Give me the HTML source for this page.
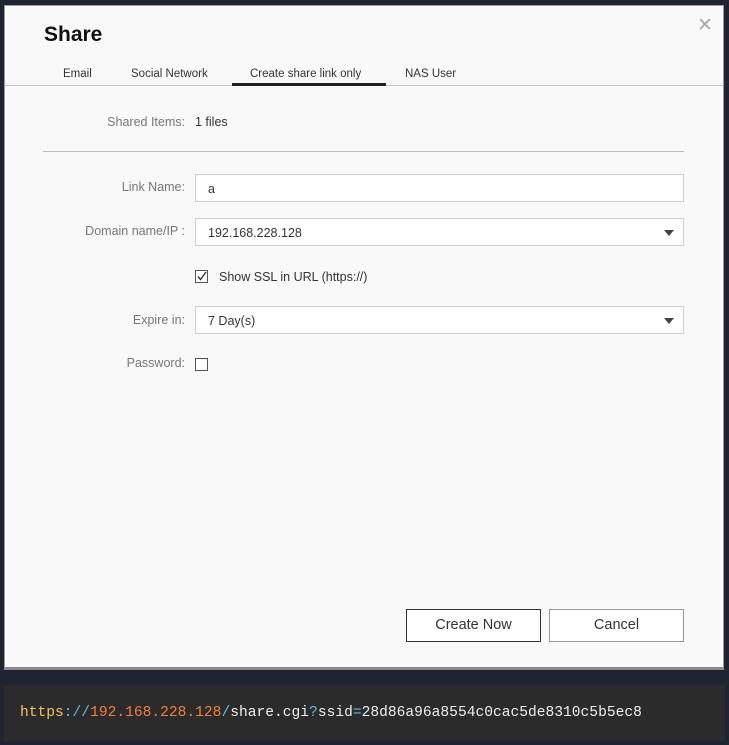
<!DOCTYPE html>
<html><head><meta charset="utf-8"><style>
*{margin:0;padding:0;box-sizing:border-box}
body{width:729px;height:745px;background:#1f2530;position:relative;overflow:hidden;font-family:"Liberation Sans",Arial,sans-serif;}
.dlg{position:absolute;left:4px;top:5px;width:720px;height:665px;background:#f9f9f9;border:1px solid #9a9a9a;border-bottom:3px solid #8a8a8a;}
.a{position:absolute}
.title{left:39px;top:17px;font-size:21px;font-weight:bold;color:#111}
.x{left:692px;top:8px;font-size:19px;color:#aaa}
.tab{top:62px;font-size:11.5px;color:#333}
.tabline{left:0;top:79px;width:718px;height:1px;background:#c8c8c8}
.act{left:227px;top:77px;width:154px;height:3px;background:#222}
.lbl{font-size:12.5px;color:#777;text-align:right;width:180px;left:0}
.val{font-size:12.5px;color:#333}
.inp{background:#fff;border:1px solid #cfcfcf;left:190px;width:489px;height:28px;font-size:12.5px;color:#333;padding:7px 0 0 12px}
.arr{position:absolute;right:9px;top:11px;width:0;height:0;border-left:5px solid transparent;border-right:5px solid transparent;border-top:6px solid #444}
.cb{left:190px;width:13px;height:13px;border:1px solid #555;background:#fff}
.btn{top:603px;width:135px;height:33px;background:#fff;font-size:14.5px;color:#333;text-align:center;line-height:31px}
.code{position:absolute;left:4px;top:685px;width:721px;height:56px;background:#2b2b2b;font-family:"Liberation Mono",monospace;font-size:14.6px;color:#eeeeee;padding:20px 0 0 16px;white-space:pre}
.y{color:#f2c462}.c{color:#5fbcd3}.o{color:#f0803c}
</style></head><body>
<div class="dlg">
<div class="a title">Share</div>
<div class="a x">✕</div>
<div class="a tab" style="left:58px">Email</div>
<div class="a tab" style="left:126px">Social Network</div>
<div class="a tab" style="left:245px">Create share link only</div>
<div class="a tab" style="left:400px">NAS User</div>
<div class="a tabline"></div>
<div class="a act"></div>
<div class="a lbl" style="top:109px">Shared Items:</div>
<div class="a val" style="left:190px;top:109px">1 files</div>
<div class="a" style="left:38px;top:145px;width:641px;height:1px;background:#bbb"></div>
<div class="a lbl" style="top:174px">Link Name:</div>
<div class="a inp" style="top:168px">a</div>
<div class="a lbl" style="top:218px">Domain name/IP :</div>
<div class="a inp" style="top:212px">192.168.228.128<span class="arr"></span></div>
<div class="a cb" style="top:264px"><svg width="11" height="11" style="position:absolute;left:0;top:0"><path d="M2 5.5 L4.5 8.5 L10 1" stroke="#333" stroke-width="1.4" fill="none"/></svg></div>
<div class="a val" style="left:214px;top:264px">Show SSL in URL (https://)</div>
<div class="a lbl" style="top:307px">Expire in:</div>
<div class="a inp" style="top:300px">7 Day(s)<span class="arr"></span></div>
<div class="a lbl" style="top:350px">Password:</div>
<div class="a cb" style="top:352px"></div>
<div class="a btn" style="left:401px;border:1px solid #333">Create Now</div>
<div class="a btn" style="left:544px;border:1px solid #999">Cancel</div>
</div>
<div class="code"><span class="y">https</span><span class="c">://</span><span class="o">192.168.228.128</span><span class="c">/</span>share.cgi<span class="c">?</span>ssid<span class="c">=</span>28d86a96a8554c0cac5de8310c5b5ec8</div>
</body></html>
